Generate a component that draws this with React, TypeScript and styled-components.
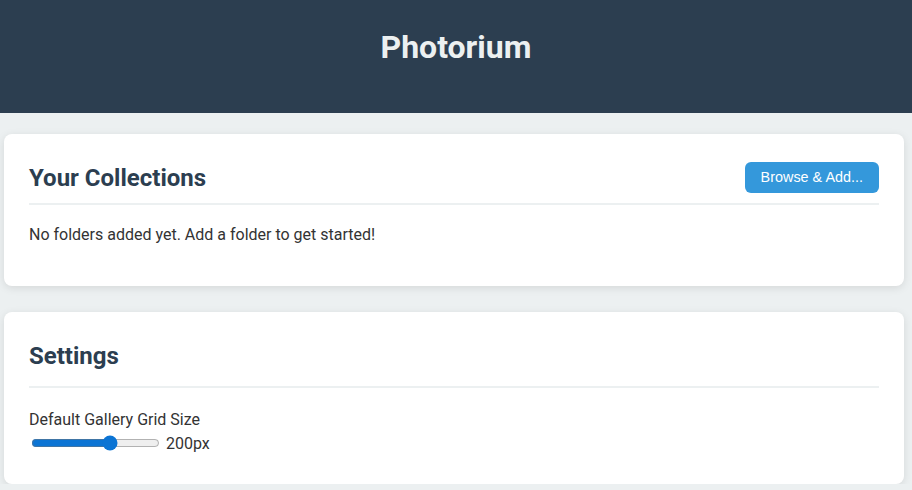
import * as React from 'react';
import styled, { createGlobalStyle } from 'styled-components';

const GlobalStyle = createGlobalStyle`
  html, body {
    margin: 0;
    padding: 0;
    background: #ecf0f1;
    font-family: Roboto, "Liberation Sans", Arial, sans-serif;
    color: #333;
  }
`;

const Header = styled.header`
  background: #2c3e50;
  height: 113px;
  box-sizing: border-box;
  padding-top: 28px;
  text-align: center;
`;

const Title = styled.h1`
  margin: 0;
  font-size: 32px;
  font-weight: 700;
  color: #ecf0f1;
`;

const Main = styled.main`
  display: flex;
  flex-direction: column;
  gap: 26px;
  padding: 21px 8px 0 4px;
`;

const Card = styled.section`
  background: #fff;
  border-radius: 8px;
  box-shadow: 0 2px 8px rgba(0, 0, 0, 0.1);
  padding: 28px 25px 25px;
`;

const SectionHeader = styled.div<{ $pad: number }>`
  display: flex;
  align-items: center;
  justify-content: space-between;
  min-height: 31px;
  padding-bottom: ${({ $pad }) => $pad}px;
  border-bottom: 2px solid #ecf0f1;
  margin-bottom: 20px;
`;

const SectionTitle = styled.h2`
  margin: 0;
  font-size: 24px;
  font-weight: 700;
  color: #2c3e50;
`;

const Button = styled.button`
  background: #3498db;
  color: #fff;
  border: none;
  border-radius: 6px;
  padding: 8px 16px;
  font-family: "Liberation Sans", Arial, sans-serif;
  font-size: 14.4px;
  line-height: 15px;
  cursor: pointer;
`;

const Empty = styled.p`
  margin: 0 0 17px;
  font-size: 16px;
`;

const SettingItem = styled.div`
  display: flex;
  flex-direction: column;
  gap: 4px;
  padding: 2px 0 6px;
`;

const Label = styled.label`
  font-size: 16px;
`;

const SliderRow = styled.div`
  display: flex;
  align-items: center;
  gap: 4px;
`;

const Slider = styled.input`
  width: 129px;
  margin: 2px;
  accent-color: #0b74d4;
`;

const Value = styled.span`
  font-size: 16px;
`;

export default function App() {
  const [size, setSize] = React.useState(200);
  return (
    <>
      <GlobalStyle />
      <Header>
        <Title>Photorium</Title>
      </Header>
      <Main>
        <Card>
          <SectionHeader $pad={10}>
            <SectionTitle>Your Collections</SectionTitle>
            <Button>Browse &amp; Add...</Button>
          </SectionHeader>
          <Empty>No folders added yet. Add a folder to get started!</Empty>
        </Card>
        <Card>
          <SectionHeader $pad={15}>
            <SectionTitle>Settings</SectionTitle>
          </SectionHeader>
          <SettingItem>
            <Label htmlFor="grid-size">Default Gallery Grid Size</Label>
            <SliderRow>
              <Slider
                id="grid-size"
                type="range"
                min={100}
                max={260}
                step={10}
                value={size}
                onChange={(e) => setSize(Number(e.target.value))}
              />
              <Value>{size}px</Value>
            </SliderRow>
          </SettingItem>
        </Card>
      </Main>
    </>
  );
}
